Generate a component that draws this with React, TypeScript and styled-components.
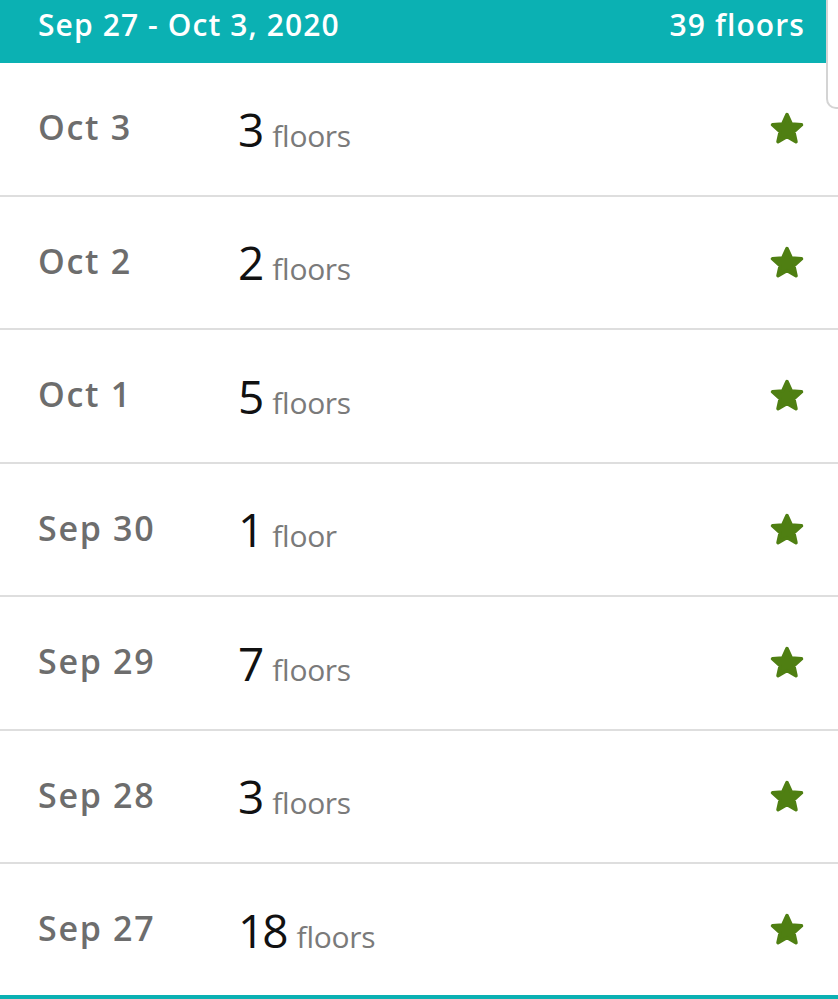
import styled, { createGlobalStyle } from "styled-components";

const Global = createGlobalStyle`
  html, body {
    margin: 0;
    padding: 0;
    background: #ffffff;
  }
  body {
    font-family: "Open Sans", "Lato", sans-serif;
  }
`;

const Page = styled.div`
  width: 838px;
  height: 999px;
  position: relative;
  overflow: hidden;
  background: #fff;
  display: flex;
  flex-direction: column;
`;

const Header = styled.div`
  height: 63px;
  background: #0bb1b3;
  color: #fff;
  display: flex;
  align-items: center;
  justify-content: space-between;
  padding: 0 33px 14px 38px;
  box-sizing: border-box;
  font-size: 30px;
  font-weight: 600;
  letter-spacing: 1.1px;
`;

const List = styled.div`
  display: flex;
  flex-direction: column;
`;

const Row = styled.div`
  height: 133.5px;
  box-sizing: border-box;
  border-bottom: 2px solid #dedede;
  display: flex;
  align-items: center;
  padding: 0 33px 0 38px;
`;

const DateLabel = styled.div`
  width: 200px;
  font-size: 34px;
  font-weight: 600;
  color: #6d6d6d;
  letter-spacing: 1.7px;
  margin-top: -3px;
`;

const Value = styled.div`
  flex: 1;
  display: flex;
  align-items: baseline;
  gap: 10px;
`;

const Count = styled.span`
  font-size: 46px;
  font-weight: 400;
  color: #111;
  letter-spacing: -2px;
`;

const Unit = styled.span`
  font-size: 30px;
  color: #7a7a7a;
  letter-spacing: -0.3px;
`;

const Bottom = styled.div`
  position: absolute;
  left: 0;
  right: 0;
  bottom: 0;
  height: 4px;
  background: #0bb1b3;
`;

const ScrollHint = styled.div`
  position: absolute;
  top: -10px;
  right: -12px;
  width: 20px;
  height: 115px;
  border: 2px solid #d4d4d4;
  border-radius: 10px;
  background: #fff;
`;

const Star = () => (
  <svg width="36" height="35" viewBox="0 0 36 34">
    <polygon
      points="18,3 22.3,12.4 32.5,13.3 24.8,20.2 27,30.2 18,25 9,30.2 11.2,20.2 3.5,13.3 13.7,12.4"
      fill="#4f7f12"
      stroke="#4f7f12"
      strokeWidth="3.5"
      strokeLinejoin="round"
    />
  </svg>
);

const days = [
  { date: "Oct 3", n: 3 },
  { date: "Oct 2", n: 2 },
  { date: "Oct 1", n: 5 },
  { date: "Sep 30", n: 1 },
  { date: "Sep 29", n: 7 },
  { date: "Sep 28", n: 3 },
  { date: "Sep 27", n: 18 },
];

export default function App() {
  return (
    <Page>
      <Global />
      <Header>
        <span>Sep 27 - Oct 3, 2020</span>
        <span>39 floors</span>
      </Header>
      <List>
        {days.map((d) => (
          <Row key={d.date}>
            <DateLabel>{d.date}</DateLabel>
            <Value>
              <Count>{d.n}</Count>
              <Unit>{d.n === 1 ? "floor" : "floors"}</Unit>
            </Value>
            <Star />
          </Row>
        ))}
      </List>
      <ScrollHint />
      <Bottom />
    </Page>
  );
}
